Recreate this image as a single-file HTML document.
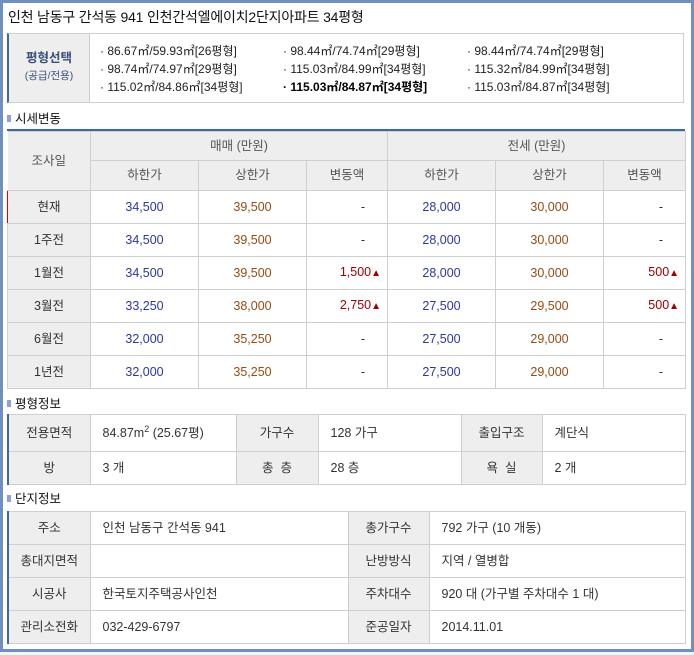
<!DOCTYPE html>
<html><head><meta charset="utf-8"><style>
*{margin:0;padding:0;box-sizing:border-box}
body{width:694px;height:655px;background:#f4f4f4;font-family:"Liberation Sans","Noto Sans CJK KR",sans-serif;font-size:12.5px;line-height:15px;color:#333;position:relative;overflow:hidden}
.frame{position:absolute;left:0;top:0;width:694px;height:652px;background:#6f8fbf}
.inner{position:absolute;left:3px;top:3px;width:688px;height:646px;background:#fff}
.abs{position:absolute}
table{border-collapse:collapse;position:absolute;table-layout:fixed}
td{border:1px solid #cfcfcf;text-align:center;padding:0;line-height:15px;vertical-align:middle}
.g{background:#eeeeee;color:#333}
.h{color:#555}
.l{text-align:left;padding-left:12px}
.b{color:#2b36a8}.o{color:#9a4a12}.r{color:#a00000;text-align:right;padding-right:6px}.d{text-align:right;padding-right:22px}
.sec{position:absolute;left:7px;font-size:12.5px;line-height:15px;color:#111}
.sec i{display:inline-block;width:4px;height:7px;background:#8fa0d8;margin-right:4px;vertical-align:1px}
.tri{font-size:10px}
</style></head><body>
<div class="frame"></div><div class="inner"></div>
<div class="abs" style="left:8px;top:8px;font-size:14px;line-height:18px;color:#111;letter-spacing:-0.2px">인천 남동구 간석동 941 인천간석엘에이치2단지아파트 34평형</div>

<div class="abs" style="left:7px;top:33px;width:677px;height:70px;border:1px solid #cfcfcf;border-left:2px solid #3b6aa0"></div>
<div class="abs g" style="left:9px;top:34px;width:81px;height:68px;border-right:1px solid #cfcfcf;text-align:center;color:#3a4f7a">
<div style="margin-top:17px;font-size:12.5px;font-weight:bold">평형선택</div><div style="font-size:10.5px;margin-top:3px">(공급/전용)</div></div>
<div class="abs" style="left:100px;top:42px;line-height:18px;font-size:12px;color:#222">· 86.67㎡/59.93㎡[26평형]<br>· 98.74㎡/74.97㎡[29평형]<br>· 115.02㎡/84.86㎡[34평형]</div>
<div class="abs" style="left:283px;top:42px;line-height:18px;font-size:12px;color:#222">· 98.44㎡/74.74㎡[29평형]<br>· 115.03㎡/84.99㎡[34평형]<br><b style="color:#000">· 115.03㎡/84.87㎡[34평형]</b></div>
<div class="abs" style="left:467px;top:42px;line-height:18px;font-size:12px;color:#222">· 98.44㎡/74.74㎡[29평형]<br>· 115.32㎡/84.99㎡[34평형]<br>· 115.03㎡/84.87㎡[34평형]</div>

<div class="sec" style="top:112px"><i></i>시세변동</div>
<div class="abs" style="left:7px;top:129px;width:678px;height:2px;background:#3b6aa0"></div>
<table style="left:7px;top:131px;width:678px">
<colgroup><col style="width:83px"><col style="width:108px"><col style="width:108px"><col style="width:81px"><col style="width:108px"><col style="width:108px"><col style="width:82px"></colgroup>
<tr style="height:29px"><td class="g h" rowspan="2" style="border-left:none">조사일</td><td class="g h" colspan="3">매매 (만원)</td><td class="g h" colspan="3">전세 (만원)</td></tr>
<tr style="height:30px"><td class="g h">하한가</td><td class="g h">상한가</td><td class="g h">변동액</td><td class="g h">하한가</td><td class="g h">상한가</td><td class="g h">변동액</td></tr>
<tr style="height:33px"><td class="g" style="border-left:1px solid #d00">현재</td><td class="b">34,500</td><td class="o">39,500</td><td class="d">-</td><td class="b">28,000</td><td class="o">30,000</td><td class="d">-</td></tr>
<tr style="height:33px"><td class="g">1주전</td><td class="b">34,500</td><td class="o">39,500</td><td class="d">-</td><td class="b">28,000</td><td class="o">30,000</td><td class="d">-</td></tr>
<tr style="height:33px"><td class="g">1월전</td><td class="b">34,500</td><td class="o">39,500</td><td class="r">1,500<span class="tri">▲</span></td><td class="b">28,000</td><td class="o">30,000</td><td class="r">500<span class="tri">▲</span></td></tr>
<tr style="height:33px"><td class="g">3월전</td><td class="b">33,250</td><td class="o">38,000</td><td class="r">2,750<span class="tri">▲</span></td><td class="b">27,500</td><td class="o">29,500</td><td class="r">500<span class="tri">▲</span></td></tr>
<tr style="height:33px"><td class="g">6월전</td><td class="b">32,000</td><td class="o">35,250</td><td class="d">-</td><td class="b">27,500</td><td class="o">29,000</td><td class="d">-</td></tr>
<tr style="height:33px"><td class="g">1년전</td><td class="b">32,000</td><td class="o">35,250</td><td class="d">-</td><td class="b">27,500</td><td class="o">29,000</td><td class="d">-</td></tr>
</table>

<div class="sec" style="top:397px"><i></i>평형정보</div>
<table style="left:7px;top:414px;width:677px;border-left:2px solid #3b6aa0">
<colgroup><col style="width:82px"><col style="width:146px"><col style="width:82px"><col style="width:143px"><col style="width:81px"><col style="width:143px"></colgroup>
<tr style="height:37px"><td class="g">전용면적</td><td class="l">84.87m<sup style="font-size:9px;line-height:0">2</sup> (25.67평)</td><td class="g">가구수</td><td class="l">128 가구</td><td class="g">출입구조</td><td class="l">계단식</td></tr>
<tr style="height:33px"><td class="g">방</td><td class="l">3 개</td><td class="g">총 &nbsp;층</td><td class="l">28 층</td><td class="g">욕 &nbsp;실</td><td class="l">2 개</td></tr>
</table>

<div class="sec" style="top:492px"><i></i>단지정보</div>
<table style="left:7px;top:511px;width:677px;border-left:2px solid #3b6aa0">
<colgroup><col style="width:82px"><col style="width:258px"><col style="width:81px"><col style="width:256px"></colgroup>
<tr style="height:33px"><td class="g">주소</td><td class="l">인천 남동구 간석동 941</td><td class="g">총가구수</td><td class="l">792 가구 (10 개동)</td></tr>
<tr style="height:33px"><td class="g">총대지면적</td><td class="l"></td><td class="g">난방방식</td><td class="l">지역 / 열병합</td></tr>
<tr style="height:33px"><td class="g">시공사</td><td class="l">한국토지주택공사인천</td><td class="g">주차대수</td><td class="l">920 대 (가구별 주차대수 1 대)</td></tr>
<tr style="height:33px"><td class="g">관리소전화</td><td class="l">032-429-6797</td><td class="g">준공일자</td><td class="l">2014.11.01</td></tr>
</table>
</body></html>
